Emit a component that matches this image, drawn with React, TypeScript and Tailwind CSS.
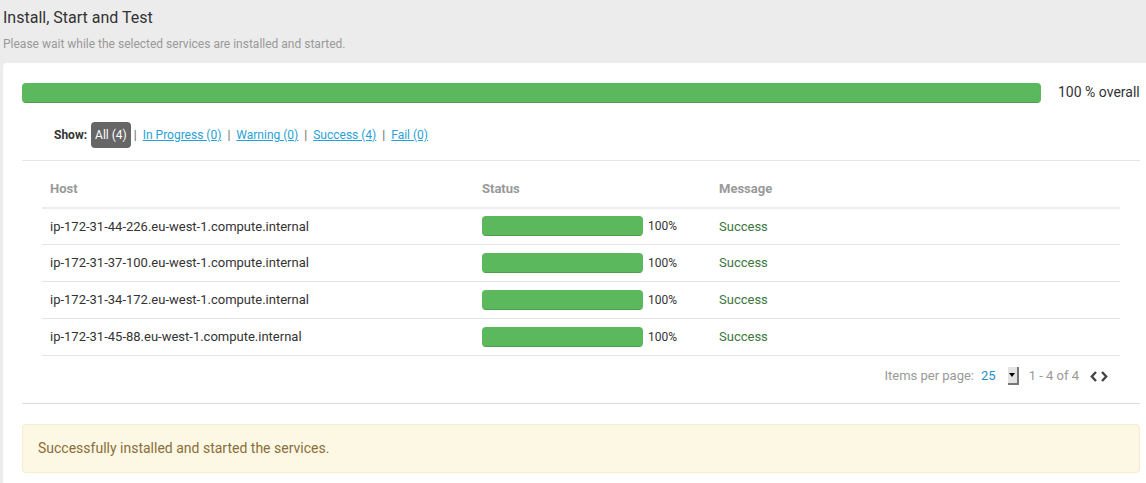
const hosts = [
  'ip-172-31-44-226.eu-west-1.compute.internal',
  'ip-172-31-37-100.eu-west-1.compute.internal',
  'ip-172-31-34-172.eu-west-1.compute.internal',
  'ip-172-31-45-88.eu-west-1.compute.internal',
];

const filters = ['In Progress (0)', 'Warning (0)', 'Success (4)', 'Fail (0)'];

const ProgressBar = ({ className }: { className: string }) => (
  <div className={`bg-[#f5f5f5] rounded-[4px] overflow-hidden ${className}`}>
    <div className="h-full w-full bg-[#5cb85c] shadow-[inset_0_-1px_0_rgba(0,0,0,0.15)]" />
  </div>
);

const App = () => {
  return (
    <div
      className="min-h-screen bg-[#ececec] pl-[3px] text-[#333]"
      style={{ fontFamily: 'Roboto, "Liberation Sans", sans-serif' }}
    >
      <div className="pt-[8px]">
        <h2 className="text-[16px] leading-[20px] font-normal text-[#333]">
          Install, Start and Test
        </h2>
        <p className="mt-[8px] text-[12px] leading-[17px] text-[#999]">
          Please wait while the selected services are installed and started.
        </p>
      </div>

      <div className="mt-[10px] bg-white rounded-tl-[4px] pl-[19px] pr-[6px] pt-[19px] pb-[10px]">
        {/* Overall progress */}
        <div className="flex items-center">
          <ProgressBar className="h-[20px] w-[1019px]" />
          <span className="ml-[17px] text-[14px] text-[#333]">100 % overall</span>
        </div>

        {/* Filter */}
        <div className="mt-[19px] flex items-center pl-[32px] text-[12px]">
          <span className="font-bold text-[#333]">Show:</span>
          <span className="ml-[4px] h-[26px] px-[4px] flex items-center rounded-[4px] bg-[#666] text-white">
            All (4)
          </span>
          {filters.map((f, i) => (
            <span key={f} className="flex items-center">
              <span className={`${i === 0 ? 'ml-[3px]' : 'ml-[6px]'} mr-[6px] text-[#666]`}>|</span>
              <a href="#" className="text-[#2a9fd6] underline">
                {f}
              </a>
            </span>
          ))}
        </div>

        <div className="mt-[12px] border-t border-[#e5e5e5] w-[1118px]">
          <div className="px-[20px]">
            <table className="w-full text-[13px] border-collapse">
              <thead>
                <tr className="border-b-2 border-[#eee] text-left text-[#999]">
                  <th className="w-[432px] pl-[8px] pt-[18px] pb-[8px] font-bold">Host</th>
                  <th className="w-[237px] pl-[8px] pt-[18px] pb-[8px] font-bold">Status</th>
                  <th className="pl-[8px] pt-[18px] pb-[8px] font-bold">Message</th>
                </tr>
              </thead>
              <tbody>
                {hosts.map((h) => (
                  <tr key={h} className="border-b border-[#e5e5e5] h-[37px]">
                    <td className="pl-[8px] text-[#333]">{h}</td>
                    <td className="pl-[8px]">
                      <div className="flex items-center">
                        <ProgressBar className="h-[20px] w-[161px]" />
                        <span className="ml-[5px] text-[12px] text-[#333]">100%</span>
                      </div>
                    </td>
                    <td className="pl-[8px] text-[#3c763d]">Success</td>
                  </tr>
                ))}
              </tbody>
            </table>

            <div className="flex items-center justify-end h-[40px] text-[13px] pr-[12px]">
              <span className="text-[#999]">Items per page:</span>
              <span className="ml-[7px] text-[#2a8fc7]">25</span>
              <span className="ml-[12px] h-[18px] w-[11px] bg-[#e3e3e3] border-r-2 border-b-2 border-[#777] flex items-center justify-center">
                <span className="w-0 h-0 border-l-[3px] border-r-[3px] border-t-[4px] border-l-transparent border-r-transparent border-t-black" />
              </span>
              <span className="ml-[10px] text-[#999]">1 - 4 of 4</span>
              <span className="ml-[11px] flex items-center gap-[4px] text-[#444]">
                <svg width="7" height="11" viewBox="0 0 7 11" fill="none" stroke="currentColor" strokeWidth="2.4">
                  <path d="M6 1 L1.8 5.5 L6 10" />
                </svg>
                <svg width="7" height="11" viewBox="0 0 7 11" fill="none" stroke="currentColor" strokeWidth="2.4">
                  <path d="M1 1 L5.2 5.5 L1 10" />
                </svg>
              </span>
            </div>
          </div>
          <div className="mt-[7px] border-b border-[#ddd] rounded-b-[4px] h-[1px]" />
        </div>

        <div className="mt-[20px] w-[1118px] h-[49px] rounded-[4px] border border-[#faebcc] bg-[#fcf8e3] px-[15px] flex items-center text-[14px] text-[#8a6d3b]">
          Successfully installed and started the services.
        </div>
      </div>
    </div>
  );
};

export default App;
